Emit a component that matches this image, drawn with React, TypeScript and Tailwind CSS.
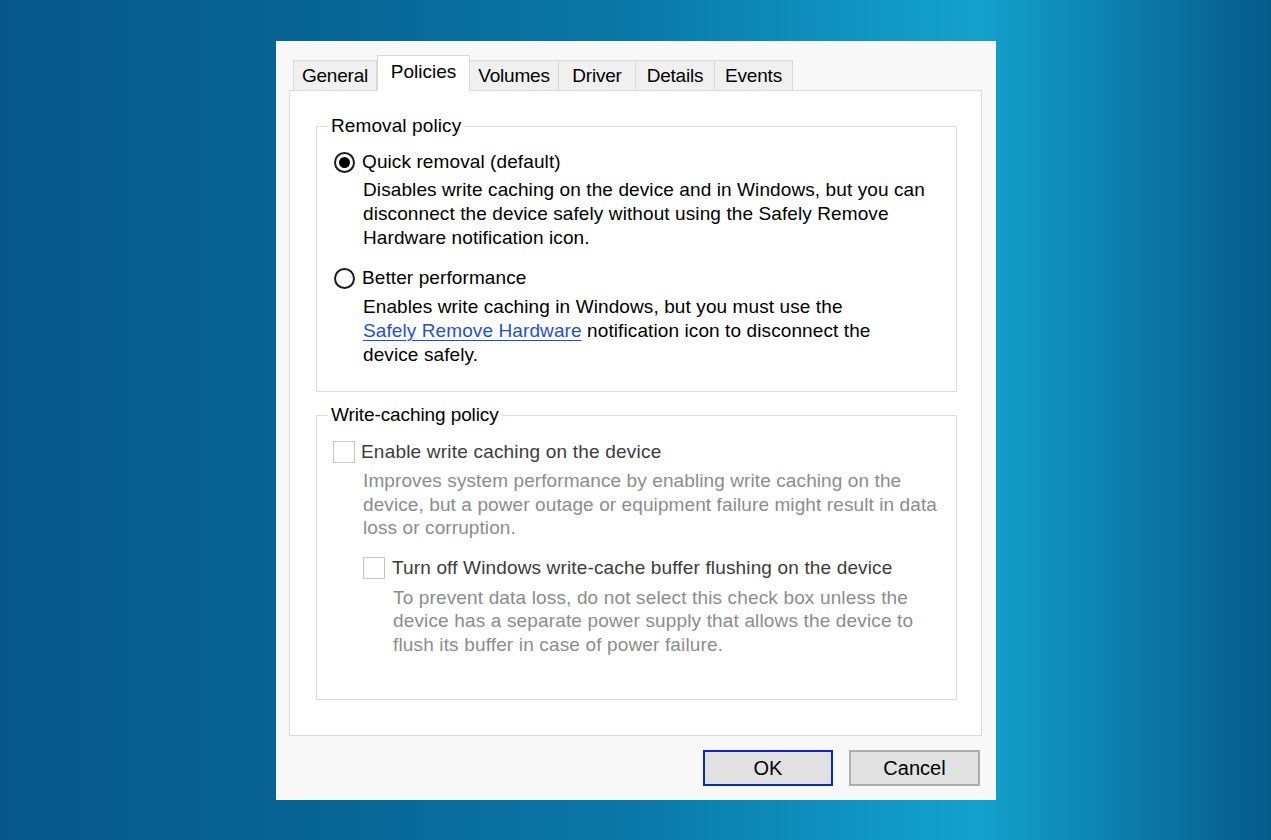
import React from "react";

const font = { fontFamily: '"Liberation Sans", Arial, sans-serif' };

function Tab({ label, width, selected }: { label: string; width: string; selected?: boolean }) {
  if (selected) {
    return (
      <div
        className={`${width} h-[36px] -mb-[1px] relative z-10 bg-white border border-b-0 border-[#d9d9d9] flex items-start justify-center pt-[4px] text-[19px] leading-[24px] text-black`}
      >
        {label}
      </div>
    );
  }
  return (
    <div
      className={`${width} h-[30px] bg-[#f0f0f0] border border-b-0 border-[#d9d9d9] -ml-[1px] flex items-center justify-center text-[19px] leading-[24px] text-black tracking-[-0.2px]`}
    >
      {label}
    </div>
  );
}

function Radio({ checked }: { checked?: boolean }) {
  return (
    <div className="w-[21px] h-[21px] rounded-full border-[2px] border-[#1a1a1a] bg-white flex items-center justify-center shrink-0">
      {checked && <div className="w-[11px] h-[11px] rounded-full bg-black" />}
    </div>
  );
}

function Check() {
  return <div className="w-[22px] h-[22px] border-[1.5px] border-[#c4c4c4] bg-white shrink-0" />;
}

export default function App() {
  return (
    <div
      style={font}
      className="w-[1271px] h-[840px] overflow-hidden bg-[linear-gradient(90deg,#06568a_0%,#076595_25%,#0a78a8_50%,#0f92c0_66%,#13a2cc_77%,#0d82b0_87%,#055a8a_100%)] pl-[276px] pt-[41px]"
    >
      <div className="w-[720px] h-[759px] bg-[#f8f8f8] border border-[#fdfdfd] px-[12px] pt-[12px] flex flex-col">
        {/* tabs */}
        <div className="flex items-end pl-[5px] h-[36px]">
          <Tab label="General" width="w-[84px]" />
          <Tab label="Policies" width="w-[93px]" selected />
          <Tab label="Volumes" width="w-[90px]" />
          <Tab label="Driver" width="w-[78px]" />
          <Tab label="Details" width="w-[80px]" />
          <Tab label="Events" width="w-[79px]" />
        </div>

        {/* panel */}
        <div className="w-[693px] h-[646px] bg-white border border-[#d9d9d9] pt-[23px] pl-[26px] pr-[24px] flex flex-col text-[19px] leading-[24px] tracking-[0.1px]">
          <fieldset className="h-[278px] border border-[#dcdcdc] pl-[17px] pr-[10px]">
            <legend className="-ml-[6px] px-[3px] text-black">Removal policy</legend>
            <div className="mt-[12px] flex items-center gap-[7px] h-[24px]">
              <Radio checked />
              <span className="text-black">Quick removal (default)</span>
            </div>
            <div className="mt-[4px] ml-[29px] text-black">
              <div>Disables write caching on the device and in Windows, but you can</div>
              <div>disconnect the device safely without using the Safely Remove</div>
              <div>Hardware notification icon.</div>
            </div>
            <div className="mt-[16px] flex items-center gap-[7px] h-[24px]">
              <Radio />
              <span className="text-black">Better performance</span>
            </div>
            <div className="mt-[5px] ml-[29px] text-black">
              <div>Enables write caching in Windows, but you must use the</div>
              <div>
                <span className="text-[#1f4fd6] underline underline-offset-[3px]">Safely Remove Hardware</span> notification icon to disconnect the
              </div>
              <div>device safely.</div>
            </div>
          </fieldset>

          <fieldset className="mt-[11px] h-[297px] border border-[#dcdcdc] pl-[16px] pr-[10px]">
            <legend className="-ml-[5px] px-[3px] text-black tracking-[-0.1px]">Write-caching policy</legend>
            <div className="mt-[13px] flex items-center gap-[6px] h-[24px]">
              <Check />
              <span className="text-[#3c3c3c] tracking-[0.2px]">Enable write caching on the device</span>
            </div>
            <div className="mt-[5px] ml-[30px] leading-[23.5px] text-[#8c8c8c]">
              <div>Improves system performance by enabling write caching on the</div>
              <div>device, but a power outage or equipment failure might result in data</div>
              <div>loss or corruption.</div>
            </div>
            <div className="mt-[16px] ml-[30px] flex items-center gap-[7px] h-[24px]">
              <Check />
              <span className="text-[#3c3c3c] tracking-[0.15px]">
                Turn off Windows write-cache buffer flushing on the device
              </span>
            </div>
            <div className="mt-[6px] ml-[60px] leading-[23.5px] text-[#8c8c8c] tracking-[0.15px]">
              <div>To prevent data loss, do not select this check box unless the</div>
              <div>device has a separate power supply that allows the device to</div>
              <div>flush its buffer in case of power failure.</div>
            </div>
          </fieldset>
        </div>

        {/* buttons */}
        <div className="mt-[14px] flex justify-end gap-[16px] pr-[3px]">
          <button className="w-[130px] h-[36px] bg-[#e1e1e1] border-[2px] border-[#0a28c8] text-[20px] text-black">
            OK
          </button>
          <button className="w-[131px] h-[36px] bg-[#e1e1e1] border-[2px] border-[#adadad] text-[20px] text-black">
            Cancel
          </button>
        </div>
      </div>
    </div>
  );
}
